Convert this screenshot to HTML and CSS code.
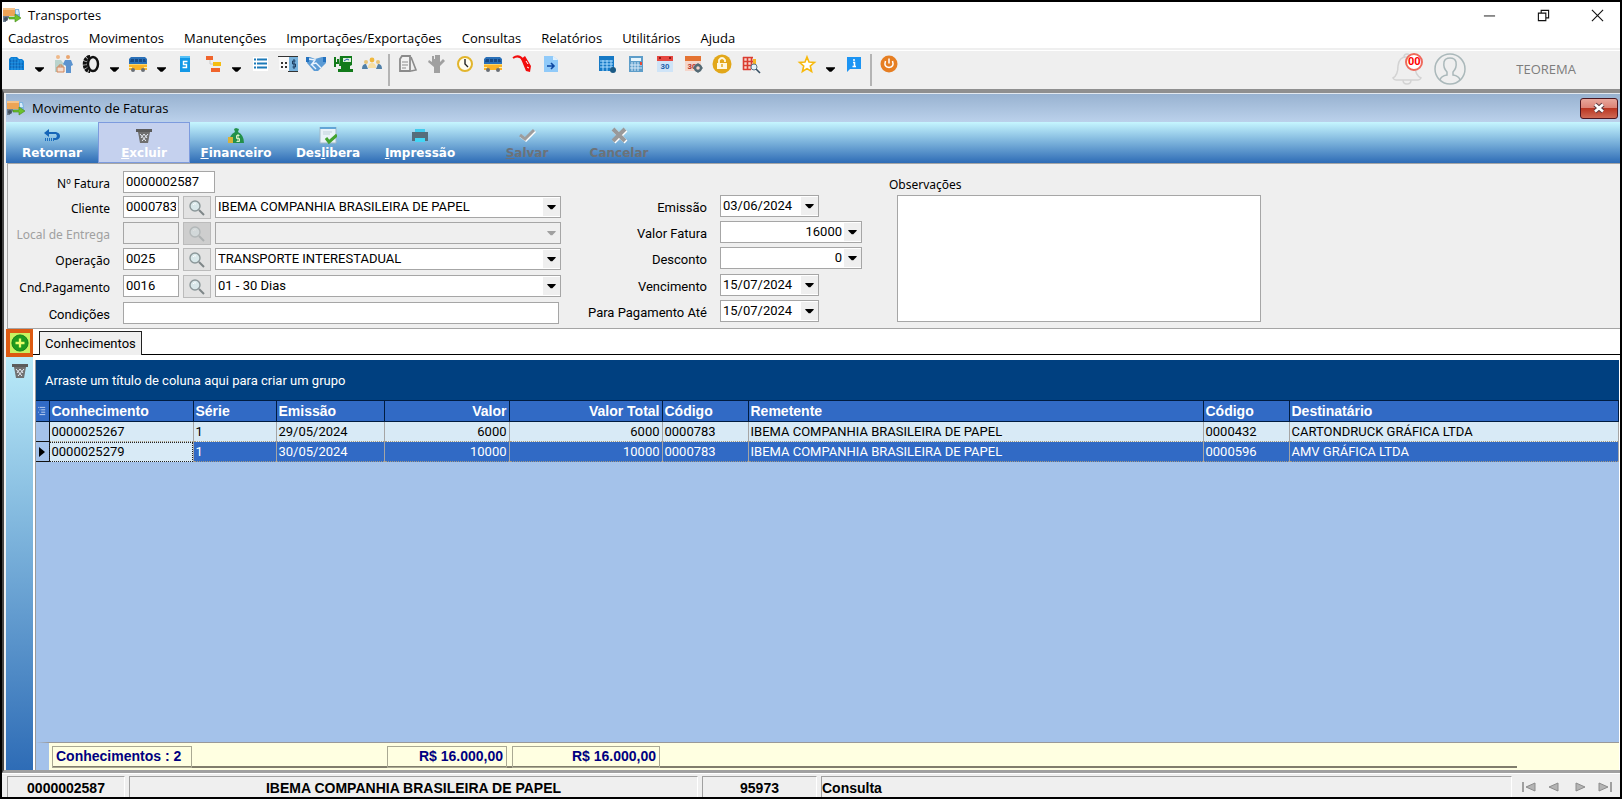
FILE: index.html
```
<!DOCTYPE html>
<html lang="pt-BR">
<head>
  <meta charset="UTF-8" />
  <title>Transportes</title>
  <link rel="stylesheet" href="styles.css">
</head>
<body>
  <svg class="defs" aria-hidden="true">
    <symbol id="truck" viewBox="0 0 20 16">
      <path d="M1 1h12v8H1z" fill="#eda456"/><path d="M1 1h12v2H1z" fill="#f6c48c"/>
      <path d="M13 2h4l1 5v4h-5z" fill="#7fb4e0"/><path d="M14 3h2l1 4h-3z" fill="#d5ecfa"/>
      <path d="M1 9h6v2l-3 1v3H1z" fill="#6f7f90"/><circle cx="4" cy="12" r="2" fill="#44525f"/>
      <path d="M7 10h6V7l6 4-6 4v-3H7z" fill="#6cc22c" stroke="#448a1a" stroke-width=".6"/>
    </symbol>
    <symbol id="bin" viewBox="0 0 18 18">
      <path d="M1 2h16v3H1z" fill="#5b5b5b"/><path d="M3 5h12l-2 11H5z" fill="#707070"/>
      <path d="M5 7l6 7M9 7l3 4M13 7l-6 7M9 7l-3 4" stroke="#e8edf5" stroke-width="1" fill="none"/>
    </symbol>
    <symbol id="bus" viewBox="0 0 20 18">
      <path d="M3 2h14l2 2v5H1V4z" fill="#2a70b8"/><path d="M3 4h3v3H2zM7 4h3v3H7zM11 4h3v3h-3zM15 4h2l1 3h-3z" fill="#184a86"/>
      <path d="M1 9h18v6H1z" fill="#fbb428"/><path d="M1 9h18v1H1z" fill="#ffd566"/>
      <path d="M1 12h3v1H1zM16 12h3v1h-3z" fill="#fff1a8"/>
      <circle cx="5" cy="15" r="2" fill="#6a6f76"/><circle cx="15" cy="15" r="2" fill="#6a6f76"/>
    </symbol>
    <symbol id="lens" viewBox="0 0 18 18">
      <circle cx="7" cy="7" r="5" fill="#d9e8ea" stroke="#8b9799" stroke-width="1.4"/>
      <path d="M11 11l5 5" stroke="#7e8688" stroke-width="2"/><path d="M5 6q1-2 3-1" stroke="#fff" fill="none"/>
    </symbol>
    <symbol id="down" viewBox="0 0 10 6"><path d="M0 0h10v1L6 5H4L0 1z" fill="currentColor"/></symbol>
  </svg>

  <header class="titlebar">
    <svg class="app-icon"><use href="#truck"/></svg>
    <h1>Transportes</h1>
    <div class="window-buttons">
      <button aria-label="Minimizar"><svg viewBox="0 0 14 14"><path d="M1 7.5h12" stroke="#111"/></svg></button>
      <button aria-label="Restaurar"><svg viewBox="0 0 14 14"><path d="M1.500 4.500h8v8h-8zM4.500 4V1.500h8v8H10" fill="none" stroke="#111" stroke-width="1.2"/></svg></button>
      <button aria-label="Fechar"><svg viewBox="0 0 14 14"><path d="M1 1l12 12M13 1L1 13" stroke="#111" stroke-width="1.2"/></svg></button>
    </div>
  </header>

  <nav class="menu">
    <a href="#">Cadastros</a>
    <a href="#">Movimentos</a>
    <a href="#">Manutenções</a>
    <a href="#">Importações/Exportações</a>
    <a href="#">Consultas</a>
    <a href="#">Relatórios</a>
    <a href="#">Utilitários</a>
    <a href="#">Ajuda</a>
  </nav>

  <div class="toolbar">
    <div class="tools">
      <button aria-label="Empresas"><svg viewBox="0 0 20 20"><path d="M3 5l2-2h6l2 2h3l2 2v9H3z" fill="#0c7fd6"/><path d="M4 7h8M4 10h13M4 13h13" stroke="#0a57a5" stroke-width="1"/><path d="M6 4v12M9 4v12M12 6v10M15 6v10" stroke="#4fb4f5" stroke-width=".6"/></svg></button>
      <button class="drop" aria-label="Mais empresas"><svg><use href="#down"/></svg></button>
      <button aria-label="Pessoas"><svg viewBox="0 0 20 20"><circle cx="5" cy="3" r="2" fill="#efb98a"/><path d="M2 6h6l3 4v8H2z" fill="#b9d3cd"/><circle cx="15" cy="3" r="2" fill="#e9a56f"/><path d="M12 6h6l2 5-2 1v7h-5v-7l-3-2z" fill="#5b93cf"/><path d="M4 13h7v5H4z" fill="#f4ddd0" stroke="#d18559"/><path d="M6 13v-2h3v2" fill="none" stroke="#d18559"/></svg></button>
      <button aria-label="Pneus"><svg viewBox="0 0 20 20"><ellipse cx="12" cy="10" rx="5" ry="7" fill="none" stroke="#111" stroke-width="2.400"/><path d="M9 3C2 3 2 17 9 17" fill="none" stroke="#111" stroke-width="4" stroke-dasharray="3 .6"/></svg></button>
      <button class="drop" aria-label="Mais pneus"><svg><use href="#down"/></svg></button>
      <button aria-label="Veículos"><svg><use href="#bus"/></svg></button>
      <button class="drop" aria-label="Mais veículos"><svg><use href="#down"/></svg></button>
      <button aria-label="Tabela de preços"><svg viewBox="0 0 20 20"><path d="M5 2h10v16H5z" fill="#1398e6"/><path d="M5 2h10v2H5z" fill="#56c1f7"/><path d="M12.500 7.500h-4v3h3v3h-4" fill="none" stroke="#fff" stroke-width="1.400"/></svg></button>
      <button aria-label="Plano de contas"><svg viewBox="0 0 20 20"><path d="M3 2h7v4H3z" fill="#f0642c"/><path d="M10 8h8v4h-8z" fill="#f5bd12"/><path d="M8 14h9v4H8z" fill="#f0642c"/><path d="M7 6v4h3" fill="none" stroke="#c9c9c9"/></svg></button>
      <button class="drop" aria-label="Mais contas"><svg><use href="#down"/></svg></button>
      <button aria-label="Lista"><svg viewBox="0 0 20 20"><path d="M3 3h15v14H3z" fill="#fff"/><path d="M4 5.500h2M4 9.500h2M4 13.500h2M7 5.500h10M7 9.500h10M7 13.500h10" stroke="#1b79b8" stroke-width="1.800"/></svg></button>
      <button aria-label="Valores"><svg viewBox="0 0 20 20"><path d="M1 3h18v13H1z" fill="#f9f9f9"/><path d="M0 2.500h20M10 17.500h10" stroke="#333"/><path d="M11 3h9v14h-9z" fill="#77b2dc"/><path d="M3 9h2M7 9h2M3 13h2M7 13h2" stroke="#333" stroke-width="2"/><path d="M17.500 7h-3v3h3v3h-3M16 5v10" fill="none" stroke="#1d3d60"/></svg></button>
      <button aria-label="Acordos"><svg viewBox="0 0 20 20"><path d="M0 3h4l5 2 7-2h4v6l-3 3-5 5h-4L1 9z" fill="#5b9bd5"/><path d="M3 5l6 1-3 4 4-1 5 5M5 10l5 5" fill="none" stroke="#eaf4ff" stroke-width="1.400"/><path d="M0 3h3v5H0zM17 3h3v5h-3z" fill="#2472bf"/></svg></button>
      <button aria-label="Abastecimento"><svg viewBox="0 0 20 20"><path d="M6 2h12v9l-2 1v3h3v3H4v-3h3v-3H5z" fill="#117a1a"/><path d="M1 3v6h3V5M1 9v4" fill="none" stroke="#117a1a" stroke-width="2"/><path d="M9 4h8v4H9z" fill="#d9f0da"/><path d="M10 7l3-2 2 1" fill="none" stroke="#2457b0"/></svg></button>
      <button aria-label="Equipe"><svg viewBox="0 0 20 20"><circle cx="10" cy="6" r="2.400" fill="#f0b83d"/><circle cx="4" cy="8" r="2" fill="#e8c478"/><circle cx="16" cy="8" r="2" fill="#e8c478"/><path d="M6 14q0-5 4-5t4 5z" fill="#f7dfa4"/><path d="M0 15q0-5 4-5l2 5zM20 15q0-5-4-5l-2 5z" fill="#5180a8"/></svg></button>
    </div>
    <span class="separator"></span>
    <div class="tools docs">
      <button aria-label="Documentos"><svg viewBox="0 0 20 20"><path d="M5 2h8v15H3V5z" fill="#f2f2f2" stroke="#8b8b8b" stroke-width="1.800"/><path d="M5 8h6M5 11h6M5 14h4" stroke="#8b8b8b"/><path d="M14 3l5 13-5 1" fill="none" stroke="#8b8b8b" stroke-width="1.600"/></svg></button>
      <button aria-label="Parar"><svg viewBox="0 0 20 20"><path d="M6 2h2v3h1V1h5v7l3-3 2 2-5 5v7H8v-6l-6-5 1-2 3 2z" fill="#a0a0a0"/></svg></button>
      <button aria-label="Horários"><svg viewBox="0 0 20 20"><circle cx="10" cy="10" r="7" fill="#fffdf0" stroke="#e2b52c" stroke-width="2"/><path d="M10 5v5l3 3" fill="none" stroke="#222" stroke-width="1.400"/></svg></button>
      <button aria-label="Viagens"><svg><use href="#bus"/></svg></button>
      <button aria-label="Combustível"><svg viewBox="0 0 20 20"><path d="M1 4q6-4 10 2" fill="none" stroke="#f20d0d" stroke-width="2"/><path d="M9 5l4-3 6 10-1 6-4-1z" fill="#f20d0d"/><path d="M14 7l2 3M15 13l2 1" stroke="#fff"/></svg></button>
      <button aria-label="Enviar arquivo"><svg viewBox="0 0 20 20"><path d="M3 2h9l5 4v12H3z" fill="#90caf9"/><path d="M12 2l5 4h-5z" fill="#e1f2ff"/><path d="M6 12h7M10 9l3 3-3 3" fill="none" stroke="#0d47a1" stroke-width="1.600"/></svg></button>
    </div>
    <div class="tools dates">
      <button aria-label="Agenda"><svg viewBox="0 0 20 20"><path d="M2 2h15v15H2z" fill="#1679c5"/><path d="M3 7h13M3 10h13M3 13h13M6 6v11M10 6v11M14 6v11" stroke="#a9dcff" stroke-width="1"/><circle cx="16" cy="16" r="3" fill="#1b5a85"/></svg></button>
      <button aria-label="Calculadora"><svg viewBox="0 0 20 20"><path d="M3 2h14v16H3z" fill="#5d9dc9"/><path d="M5 4h10v3H5z" fill="#e8f5fc"/><path d="M6 8v9M9 8v9M12 8v9M4 11h12M4 14h12" stroke="#d8eafa"/><path d="M14 8h2v3h-2z" fill="#e34b38"/></svg></button>
      <button aria-label="Calendário"><svg viewBox="0 0 20 20"><path d="M2 3h16v15H2z" fill="#cfe4f7"/><path d="M2 2h16v5H2z" fill="#e64740"/><path d="M5 3v2M15 3v2" stroke="#8e1c18" stroke-width="2"/><text x="10" y="15" class="day">30</text></svg></button>
      <button aria-label="Configurar calendário"><svg viewBox="0 0 20 20"><path d="M2 3h16v14H2z" fill="#f5d5ca"/><path d="M2 2h16v5H2z" fill="#e47332"/><text x="9" y="15" class="day red">30</text><circle cx="15" cy="14" r="3" fill="none" stroke="#546a75" stroke-width="2.400"/><path d="M15 9v10M10 14h10" stroke="#546a75" stroke-dasharray="2 6"/></svg></button>
      <button aria-label="Bloqueio"><svg viewBox="0 0 20 20"><circle cx="10" cy="10" r="9.500" fill="#e2a719"/><path d="M5 9h10v6H5z" fill="#fff8df"/><path d="M7 9V6q3-4 6 0v2" fill="none" stroke="#fff8df" stroke-width="1.800"/><path d="M10 10v3" stroke="#e2a719" stroke-width="1.400"/></svg></button>
      <button aria-label="Consultar planilha"><svg viewBox="0 0 20 20"><path d="M2 3h10v12H2z" fill="#f9d4cb"/><path d="M2.500 3v13M6.500 3v13M10.500 3v12M2 3.500h10M2 7.500h11M2 11.500h9M2 15.500h8" stroke="#da3c30" stroke-width="1.600"/><path d="M12 5h3v6h-3z" fill="#f6b523"/><circle cx="13" cy="13" r="3" fill="#e5f1f8" stroke="#5b7587"/><path d="M15 15l4 4" stroke="#364f64" stroke-width="1.600"/></svg></button>
    </div>
    <div class="tools extras">
      <button aria-label="Favoritos"><svg viewBox="0 0 20 20"><path d="M10 3l2 5 5.500.4-4.200 3.600 1.300 5.500L10 14.600l-4.600 2.900L6.700 12 2.500 8.400 8 8z" fill="#fff" stroke="#f7b90d" stroke-width="1.600"/></svg></button>
      <button class="drop" aria-label="Mais favoritos"><svg><use href="#down"/></svg></button>
      <button aria-label="Informações"><svg viewBox="0 0 20 20"><path d="M3 3h14v12H6l-3 3z" fill="#1c94f3"/><path d="M10 5v2M9 8.500h1.500V13M8.500 12.500h3.500" fill="none" stroke="#fff" stroke-width="1.500"/></svg></button>
    </div>
    <span class="separator"></span>
    <div class="tools">
      <button aria-label="Sair"><svg viewBox="0 0 20 20"><circle cx="10" cy="10" r="8.500" fill="#e67e22"/><path d="M6.500 7q-2 6 3.500 6.500Q15.500 13 13.500 7M10 4.500v5" fill="none" stroke="#fff" stroke-width="1.500"/></svg></button>
    </div>
    <div class="account">
      <button class="bell" aria-label="Notificações">
        <svg viewBox="0 0 30 32"><path d="M1 25q5-3 5-12Q7 4 14 4q8 0 9 9 0 9 6 12-1 2-3 2H4q-2 0-3-2zM11 27q0 4 4 4t4-4M12 4q0-3 3-3t3 3" fill="none" stroke="#d3d3d3" stroke-width="1.500"/></svg>
        <span class="badge">00</span>
      </button>
      <button class="avatar" aria-label="Usuário">
        <svg viewBox="0 0 32 32"><circle cx="16" cy="16" r="15" fill="none" stroke="#aab8ba" stroke-width="1.500"/><path d="M6 27q1-4 7-5v-3q-4-4-3-10 1-4 6-4t6 4q1 6-3 10v3q6 1 7 5" fill="none" stroke="#aab8ba" stroke-width="1.500"/></svg>
      </button>
      <span class="user">TEOREMA</span>
    </div>
  </div>

  <main class="child">
    <div class="child-title">
      <svg class="app-icon"><use href="#truck"/></svg>
      <h2>Movimento de Faturas</h2>
      <button class="close" aria-label="Fechar janela"><svg viewBox="0 0 14 12"><path d="M3 2.500l8 7M11 2.500l-8 7" stroke="#5b3a40" stroke-width="4.600"/><path d="M3 2.500l8 7M11 2.500l-8 7" stroke="#fff" stroke-width="2.600"/></svg></button>
    </div>

    <div class="actions">
      <button><svg viewBox="0 0 18 18"><path d="M6 2v3h7q4 1 4 4t-4 4h-2v-2h2l1-2-1-2H6v3L1 6z" fill="#1565b8"/><path d="M2 12.500h9" stroke="#1c6fc0" stroke-width="3" stroke-dasharray="1 1"/></svg>Retornar</button>
      <button class="hot"><svg><use href="#bin"/></svg><span><u>E</u>xcluir</span></button>
      <button><svg viewBox="0 0 18 18"><path d="M7 2l2-1 3 1-1 3q6 3 6 11H2q0-8 6-11z" fill="#23904a"/><path d="M1 10h5v6H1z" fill="#d8b23a"/><path d="M12.500 8.500h-3v3h3v3h-3M11 7v8" fill="none" stroke="#d8f2c2"/></svg><span><u>F</u>inanceiro</span></button>
      <button><svg viewBox="0 0 18 18"><path d="M1 0h16v16H1z" fill="#e9f2f8" stroke="#a1b9c8"/><path d="M1 0h16v2H1z" fill="#62a5d6"/><path d="M4 5h9M4 7h7" stroke="#c1d1db"/><path d="M7 11l3 4 8-7" fill="none" stroke="#43a32f" stroke-width="3"/></svg><span>Des<u>l</u>ibera</span></button>
      <button><svg viewBox="0 0 18 18"><path d="M4 2h10v4H4z" fill="#42ccee"/><path d="M1 5h16v9H1z" fill="#566d7b"/><path d="M4 11h10v4H4z" fill="#43d6f5"/></svg><span><u>I</u>mpressão</span></button>
      <button class="save" disabled><svg viewBox="0 0 18 18"><path d="M3 9l5 4 9-9" fill="none" stroke="#fff" stroke-width="3"/><path d="M2 8l5 4 9-9" fill="none" stroke="#9d9d9d" stroke-width="3"/></svg><span><u>S</u>alvar</span></button>
      <button disabled><svg viewBox="0 0 18 18"><path d="M4 3l12 12M16 3L4 15" stroke="#fff" stroke-width="4"/><path d="M3 2l12 12M15 2L3 14" stroke="#999" stroke-width="4"/></svg>Cancelar</button>
    </div>

    <form class="invoice">
      <div class="fields left">
        <label for="fatura">Nº Fatura</label>
        <input id="fatura" class="number" value="0000002587">

        <label for="cliente">Cliente</label>
        <input id="cliente" value="0000783">
        <button type="button" class="search" aria-label="Buscar cliente"><svg><use href="#lens"/></svg></button>
        <span class="combo"><select aria-label="Nome do cliente"><option>IBEMA COMPANHIA BRASILEIRA DE PAPEL</option></select><svg><use href="#down"/></svg></span>

        <label for="local" class="off">Local de Entrega</label>
        <input id="local" disabled>
        <button type="button" class="search" aria-label="Buscar local" disabled><svg><use href="#lens"/></svg></button>
        <span class="combo off"><select aria-label="Nome do local" disabled><option></option></select><svg><use href="#down"/></svg></span>

        <label for="operacao">Operação</label>
        <input id="operacao" value="0025">
        <button type="button" class="search" aria-label="Buscar operação"><svg><use href="#lens"/></svg></button>
        <span class="combo"><select aria-label="Nome da operação"><option>TRANSPORTE INTERESTADUAL</option></select><svg><use href="#down"/></svg></span>

        <label for="pagamento">Cnd.Pagamento</label>
        <input id="pagamento" value="0016">
        <button type="button" class="search" aria-label="Buscar condição"><svg><use href="#lens"/></svg></button>
        <span class="combo"><select aria-label="Condição de pagamento"><option>01 - 30 Dias</option></select><svg><use href="#down"/></svg></span>

        <label for="condicoes" class="narrow">Condições</label>
        <input id="condicoes" class="wide">
      </div>

      <div class="fields right">
        <label for="emissao">Emissão</label>
        <span class="combo date"><select id="emissao"><option>03/06/2024</option></select><svg><use href="#down"/></svg></span>
        <label for="valor">Valor Fatura</label>
        <span class="combo amount"><select id="valor"><option>16000</option></select><svg><use href="#down"/></svg></span>
        <label for="desconto">Desconto</label>
        <span class="combo amount"><select id="desconto"><option>0</option></select><svg><use href="#down"/></svg></span>
        <label for="vencimento">Vencimento</label>
        <span class="combo date"><select id="vencimento"><option>15/07/2024</option></select><svg><use href="#down"/></svg></span>
        <label for="ate">Para Pagamento Até</label>
        <span class="combo date"><select id="ate"><option>15/07/2024</option></select><svg><use href="#down"/></svg></span>
      </div>

      <div class="notes">
        <label for="obs">Observações</label>
        <textarea id="obs"></textarea>
      </div>
    </form>

    <section class="details">
      <div class="side">
        <button class="add" aria-label="Adicionar"><svg viewBox="0 0 20 20"><circle cx="10" cy="10" r="9" fill="#1e9a1e" stroke="#0e7d17"/><path d="M10 5v10M5 10h10" stroke="#eafc6a" stroke-width="2.600"/></svg></button>
        <button class="remove" aria-label="Remover"><svg><use href="#bin"/></svg></button>
      </div>
      <div class="content">
        <div class="tabs"><button class="tab">Conhecimentos</button></div>
        <div class="grid">
          <p class="group-by">Arraste um título de coluna aqui para criar um grupo</p>
          <table>
            <colgroup>
              <col class="c-mark"><col class="c-doc"><col class="c-serie"><col class="c-date"><col class="c-value"><col class="c-total"><col class="c-code"><col class="c-sender"><col class="c-code"><col>
            </colgroup>
            <thead>
              <tr>
                <th class="mark"><svg viewBox="0 0 10 12"><path d="M0 1.500h1M2 1.500h7M2 4.500h1M4 4.500h5M0 7.500h1M4 7.500h5M2 10.500h7" stroke="#dbe6fa"/></svg></th>
                <th>Conhecimento</th><th>Série</th><th>Emissão</th><th class="num">Valor</th><th class="num">Valor Total</th><th>Código</th><th>Remetente</th><th>Código</th><th>Destinatário</th>
              </tr>
            </thead>
            <tbody>
              <tr>
                <td class="mark"></td>
                <td>0000025267</td><td>1</td><td>29/05/2024</td><td class="num">6000</td><td class="num">6000</td><td>0000783</td><td>IBEMA COMPANHIA BRASILEIRA DE PAPEL</td><td>0000432</td><td>CARTONDRUCK GRÁFICA LTDA</td>
              </tr>
              <tr class="selected">
                <td class="mark"><svg viewBox="0 0 8 10"><path d="M1 0l6 5-6 5z" fill="#000"/></svg></td>
                <td class="focus">0000025279</td><td>1</td><td>30/05/2024</td><td class="num">10000</td><td class="num">10000</td><td>0000783</td><td>IBEMA COMPANHIA BRASILEIRA DE PAPEL</td><td>0000596</td><td>AMV GRÁFICA LTDA</td>
              </tr>
            </tbody>
          </table>
          <div class="summary">
            <div class="totals">
              <span class="count">Conhecimentos : 2</span>
              <span class="sum">R$ 16.000,00</span>
              <span class="sum total">R$ 16.000,00</span>
            </div>
          </div>
        </div>
      </div>
    </section>
  </main>

  <footer class="status">
    <span class="s-number">0000002587</span>
    <span class="s-client">IBEMA COMPANHIA BRASILEIRA DE PAPEL</span>
    <span class="s-code">95973</span>
    <span class="s-mode">Consulta</span>
    <div class="pager">
      <button aria-label="Primeiro"><svg viewBox="0 0 14 12"><path d="M1 1v10" stroke="#8c8c8c" stroke-width="1.600"/><path d="M13 2v8L4 6z" fill="#b4b4b4" stroke="#8c8c8c"/></svg></button>
      <button aria-label="Anterior"><svg viewBox="0 0 14 12"><path d="M11 2v8L2 6z" fill="#b4b4b4" stroke="#8c8c8c"/></svg></button>
      <button aria-label="Próximo"><svg viewBox="0 0 14 12"><path d="M3 2v8l9-4z" fill="#b4b4b4" stroke="#8c8c8c"/></svg></button>
      <button aria-label="Último"><svg viewBox="0 0 14 12"><path d="M1 2v8l9-4z" fill="#b4b4b4" stroke="#8c8c8c"/><path d="M13 1v10" stroke="#8c8c8c" stroke-width="1.600"/></svg></button>
    </div>
  </footer>
</body>
</html>
```

FILE: styles.css
```
* {
  box-sizing: border-box;
}
body {
  margin: 0;
  min-height: 100vh;
  border: 2px solid #000;
  display: flex;
  flex-direction: column;
  background-color: #efefef;
  color: #000;
  font-family: Roboto, "Liberation Sans", sans-serif;
  font-size: 13px;
}
h1, h2, p {
  margin: 0;
  font-weight: normal;
}
button, input, select, textarea {
  font: inherit;
  color: inherit;
  margin: 0;
  padding: 0;
  border: 0;
  border-radius: 0;
  background: none;
}
a {
  color: inherit;
  text-decoration: none;
}
svg {
  display: block;
}
.defs {
  position: absolute;
  width: 0;
  height: 0;
}

/* title and menu */
.titlebar {
  display: flex;
  align-items: center;
  height: 26px;
  background-color: #fff;
}
.app-icon {
  width: 20px;
  height: 16px;
}
h1, h2, .menu {
  font-family: "Open Sans", "Noto Sans", sans-serif;
  font-size: 13px;
}
h1, h2 {
  margin-left: 6px;
}
.window-buttons {
  display: flex;
  gap: 8px;
  margin-left: auto;
}
.window-buttons button {
  width: 46px;
  display: flex;
  justify-content: center;
}
.window-buttons svg {
  width: 13px;
  height: 13px;
}
.menu {
  display: flex;
  gap: 20px;
  height: 22px;
  padding: 0 6px;
  line-height: 20px;
  background-color: #fff;
  border-bottom: 2px solid #efefef;
}

/* main toolbar */
.toolbar {
  display: flex;
  height: 39px;
  padding-top: 1px;
  border-top: 1px solid #fff;
}
.tools {
  display: flex;
}
.tools button {
  width: 28px;
  height: 24px;
  display: flex;
  align-items: center;
  justify-content: center;
}
.tools svg {
  width: 20px;
  height: 20px;
}
.tools .drop {
  width: 19px;
  padding-top: 12px;
}
.tools .drop svg {
  width: 9px;
  height: 6px;
}
.separator {
  width: 2px;
  height: 32px;
  margin: 2px 3px 0 2px;
  background-color: #b4b4b4;
}
.docs, .dates {
  width: 172px;
  justify-content: space-between;
}
.dates, .extras {
  margin-left: 28px;
}
.day {
  font: bold 8px "Liberation Sans", sans-serif;
  text-anchor: middle;
  fill: #1b5fa9;
}
.day.red {
  fill: #b7352b;
}
.account {
  display: flex;
  align-items: center;
  height: 34px;
  margin-left: auto;
  padding-right: 44px;
}
.bell {
  position: relative;
  margin-right: 12px;
}
.bell svg {
  width: 30px;
  height: 32px;
}
.badge {
  position: absolute;
  top: 0;
  right: -1px;
  width: 18px;
  height: 18px;
  border: 2px solid #ee6a5c;
  border-radius: 9px;
  background-color: #fff;
  color: #f00;
  font-size: 11px;
  font-weight: bold;
  line-height: 14px;
}
.avatar svg {
  width: 32px;
  height: 32px;
}
.user {
  margin-left: 50px;
  color: #7d7d7d;
  font-family: "Open Sans", sans-serif;
  font-size: 13px;
}

/* invoice window */
.child {
  flex: 1;
  display: flex;
  flex-direction: column;
  padding-left: 2px;
  border-top: 4px solid #8f8f8f;
  border-left: 2px solid #444;
  border-bottom: 3px solid #a0a0a0;
  background-color: #efefef;
}
.child-title {
  display: flex;
  align-items: center;
  height: 29px;
  border-top: 1px solid #e2e8ef;
  background: linear-gradient(#98b2d0, #bbd1eb);
}
.close {
  width: 38px;
  height: 21px;
  margin: 0 2px 0 auto;
  display: flex;
  align-items: center;
  justify-content: center;
  border: 1px solid #4b1620;
  border-radius: 3px;
  background: linear-gradient(#e8a79c 0%, #dd8477 45%, #b8321e 46%, #cf6a55 100%);
}
.close svg {
  width: 14px;
  height: 12px;
}
.actions {
  display: flex;
  height: 41px;
  background: linear-gradient(#c6f6ff, #2e6cb6);
}
.actions button {
  width: 92px;
  display: flex;
  flex-direction: column;
  align-items: center;
  padding-top: 4px;
  border: 1px solid transparent;
  color: #fff;
  font-family: "DejaVu Sans", sans-serif;
  font-size: 12px;
  font-weight: bold;
  line-height: 16px;
}
.actions svg {
  width: 18px;
  height: 18px;
}
.actions .hot {
  border-color: #7d9bde;
  background-color: #c5d1ee;
}
.actions .save {
  margin-left: 15px;
}
.actions button:disabled {
  color: #6c7278;
}

/* form */
.invoice {
  display: flex;
  height: 166px;
  margin-left: 1px;
  padding-top: 7px;
  border-top: 1px solid #a5a5a5;
  border-bottom: 1px solid #a5a5a5;
  border-left: 1px solid #a5a5a5;
}
.fields {
  display: grid;
  row-gap: 4px;
  align-items: start;
  align-content: start;
}
.left {
  grid-template-columns: 102px 65px 28px 346px;
  grid-template-rows: 21px 22px 22px 23px 23px 22px;
  column-gap: 4px;
}
.right {
  grid-template-columns: 146px auto;
  grid-template-rows: 22px 22px 23px 22px 22px;
  column-gap: 13px;
  padding-top: 24px;
}
.fields label {
  height: 22px;
  line-height: 26px;
  text-align: right;
  white-space: nowrap;
}
.left label, .notes label {
  grid-column: 1;
  font-family: "Noto Sans", sans-serif;
  font-size: 12px;
}
.left .narrow {
  font-family: inherit;
  font-size: 13px;
}
.fields input, .combo, textarea {
  border: 1px solid #a6a6a6;
  background-color: #fff;
}
.fields input {
  height: 22px;
  margin-left: 9px;
  padding: 0 2px 2px;
  min-width: 0;
}
.fields .number {
  grid-column: 2 / 5;
  width: 92px;
}
.fields .wide {
  grid-column: 2 / 5;
  margin-right: 2px;
}
.search {
  height: 23px;
  display: flex;
  align-items: center;
  justify-content: center;
  border: 1px solid #bbb;
  background-color: #e2e2e2;
}
.search svg {
  width: 18px;
  height: 18px;
}
.search:disabled {
  background-color: #cecece;
}
.search:disabled svg {
  opacity: 0.4;
}
.combo {
  display: flex;
  align-items: center;
  height: 22px;
}
.combo select {
  flex: 1;
  min-width: 0;
  height: 20px;
  padding: 0 2px 2px;
  appearance: none;
}
.combo svg {
  width: 17px;
  height: 18px;
  padding: 7px 4px 6px;
  background-color: #efefef;
}
.fields .off, .fields input:disabled {
  color: #a0a0a0;
  background-color: #efefef;
}
.date {
  width: 99px;
}
.amount {
  width: 142px;
}
.amount select {
  text-align-last: right;
}
.notes {
  margin-left: 27px;
}
.notes label {
  display: block;
  height: 17px;
  line-height: 28px;
}
.notes textarea {
  display: block;
  width: 364px;
  height: 127px;
  margin: 7px 0 0 8px;
  resize: none;
}

/* tab and grid */
.details {
  flex: 1;
  display: flex;
}
.side {
  width: 27px;
  display: flex;
  flex-direction: column;
  align-items: center;
  background: linear-gradient(#c3f3fd, #2e6cb6);
}
.add {
  padding: 1px;
  border: 4px solid #dc5a12;
  background-color: #c8f261;
}
.add svg {
  width: 18px;
  height: 18px;
}
.remove {
  margin-top: 5px;
}
.remove svg {
  width: 18px;
  height: 18px;
}
.content {
  flex: 1;
  display: flex;
  flex-direction: column;
  background-color: #fff;
}
.tabs {
  height: 26px;
  padding: 2px 0 0 6px;
  border-bottom: 1px solid #000;
}
.tab {
  height: 24px;
  padding: 0 5px;
  border: 1px solid #222;
  border-bottom: 0;
  background-color: #efefef;
}
.grid {
  flex: 1;
  display: flex;
  flex-direction: column;
  margin: 5px 1px 0 2px;
  border-left: 1px solid #9a9a9a;
  background-color: #a4c2ea;
}
.group-by {
  padding-left: 9px;
  height: 40px;
  line-height: 42px;
  background-color: #004080;
  color: #fff;
}
table {
  width: 100%;
  table-layout: fixed;
  border-collapse: collapse;
}
.c-mark { width: 13px; }
.c-doc { width: 144px; }
.c-serie { width: 83px; }
.c-date { width: 108px; }
.c-value { width: 125px; }
.c-total { width: 153px; }
.c-code { width: 86px; }
.c-sender { width: 455px; }
th, td {
  height: 20px;
  padding: 0 2px;
  text-align: left;
  white-space: nowrap;
  border-right: 1px solid #a5a5a5;
}
th {
  height: 21px;
  border: 1px solid #001c40;
  border-left: 0;
  background-color: #316ac5;
  color: #fff;
  font-family: "Liberation Sans", sans-serif;
  font-size: 14px;
}
td {
  border-bottom: 1px dotted #a89a80;
  background-color: #d8eaf6;
}
.num {
  text-align: right;
}
.mark svg {
  width: 8px;
  height: 10px;
}
td.mark {
  background-color: #a4c2ea;
  border: 1px solid #111;
  border-left: 0;
}
.selected td {
  background-color: #316ac5;
  color: #fff;
}
.selected td.mark {
  background-color: #a4c2ea;
}
.selected .focus {
  background-color: #d8eaf6;
  color: #000;
  outline: 1px dotted #222;
  outline-offset: -1px;
}
.summary {
  height: 28px;
  margin-top: auto;
  padding: 3px 102px 0 3px;
  border-top: 1px solid #999;
  border-left: 13px solid #a4c2ea;
  background-color: #ffffe1;
}
.totals {
  display: flex;
  height: 22px;
  border-bottom: 2px solid #807d6c;
  color: #000080;
  font-family: "Liberation Sans", sans-serif;
  font-size: 14px;
  font-weight: bold;
  line-height: 19px;
}
.totals span {
  height: 22px;
  padding: 0 3px;
  border: 1px solid #aaa993;
}
.count {
  width: 140px;
}
.sum {
  width: 120px;
  margin-left: 195px;
  text-align: right;
}
.sum.total {
  width: 148px;
  margin-left: 5px;
}

/* status bar */
.status {
  display: flex;
  gap: 4px;
  height: 24px;
  padding: 2px 2px 0 5px;
  border-top: 1px solid #fff;
  font-family: "Liberation Sans", sans-serif;
  font-size: 14px;
  font-weight: bold;
  line-height: 22px;
}
.status span {
  border-top: 1px solid #a0a0a0;
  border-left: 1px solid #a0a0a0;
  border-right: 1px solid #fff;
  text-align: center;
}
.s-number {
  width: 118px;
}
.s-client {
  width: 569px;
}
.s-code {
  width: 115px;
}
.status .s-mode {
  flex: 1;
  text-align: left;
}
.pager {
  display: flex;
  align-items: center;
  justify-content: space-around;
  width: 102px;
}
.pager svg {
  width: 14px;
  height: 12px;
}
```
